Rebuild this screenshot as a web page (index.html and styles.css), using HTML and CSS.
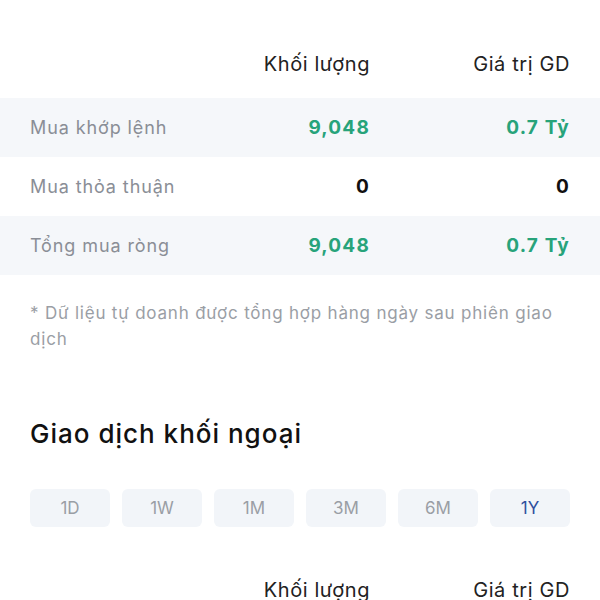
FILE: index.html
```html
<!DOCTYPE html>
<html>
  <head>
    <title>Giao dịch</title>
    <link rel="stylesheet" href="styles.css">
  </head>
  <body>
    <div class="table">
      <div class="row head">
        <span></span>
        <span>Khối lượng</span>
        <span>Giá trị GD</span>
      </div>
      <div class="row shade">
        <span class="label">Mua khớp lệnh</span>
        <span class="num up">9,048</span>
        <span class="num up">0.7 Tỷ</span>
      </div>
      <div class="row">
        <span class="label">Mua thỏa thuận</span>
        <span class="num">0</span>
        <span class="num">0</span>
      </div>
      <div class="row shade">
        <span class="label">Tổng mua ròng</span>
        <span class="num up">9,048</span>
        <span class="num up">0.7 Tỷ</span>
      </div>
    </div>

    <p class="note">* Dữ liệu tự doanh được tổng hợp hàng ngày sau phiên giao dịch</p>

    <h2 class="title">Giao dịch khối ngoại</h2>

    <div class="tabs">
      <button type="button" class="tab">1D</button>
      <button type="button" class="tab">1W</button>
      <button type="button" class="tab">1M</button>
      <button type="button" class="tab">3M</button>
      <button type="button" class="tab">6M</button>
      <button type="button" class="tab active">1Y</button>
    </div>

    <div class="table second">
      <div class="row head">
        <span></span>
        <span>Khối lượng</span>
        <span>Giá trị GD</span>
      </div>
    </div>
  </body>
</html>
```

FILE: styles.css
```css
body {
  margin: 0;
  padding-top: 30px;
  background: #fff;
  font-family: Inter, "Noto Sans", sans-serif;
  color: #1a1a1a;
}

.row {
  display: grid;
  grid-template-columns: 1fr 140px 200px;
  align-items: center;
  height: 59px;
  padding: 0 30px;
}
.row span:nth-child(2),
.row span:nth-child(3) {
  text-align: right;
}
.row.head {
  height: 68px;
  font-size: 20px;
  letter-spacing: 0.6px;
  color: #222;
}
.row.shade {
  background: #f5f7fa;
}

.label {
  font-size: 18px;
  letter-spacing: 0.9px;
  color: #8a8e96;
}
.num {
  font-size: 19px;
  font-weight: 700;
  letter-spacing: 1.2px;
  color: #111;
}
.num.up {
  color: #27a37a;
}

.note {
  margin: 25px 30px 0;
  font-size: 17px;
  line-height: 26px;
  letter-spacing: 0.8px;
  color: #9a9ea5;
}

.title {
  margin: 65px 30px 0;
  font-size: 26px;
  line-height: 34px;
  font-weight: 500;
  letter-spacing: 1px;
  color: #111;
}

.tabs {
  display: flex;
  gap: 12px;
  margin: 38px 30px 0;
}
.tab {
  width: 80px;
  height: 38px;
  border: none;
  border-radius: 6px;
  background: #f2f5f9;
  font-family: inherit;
  font-size: 17px;
  color: #9a9ea5;
}
.tab.active {
  color: #2f4f9e;
}

.second {
  margin-top: 29px;
}
```
